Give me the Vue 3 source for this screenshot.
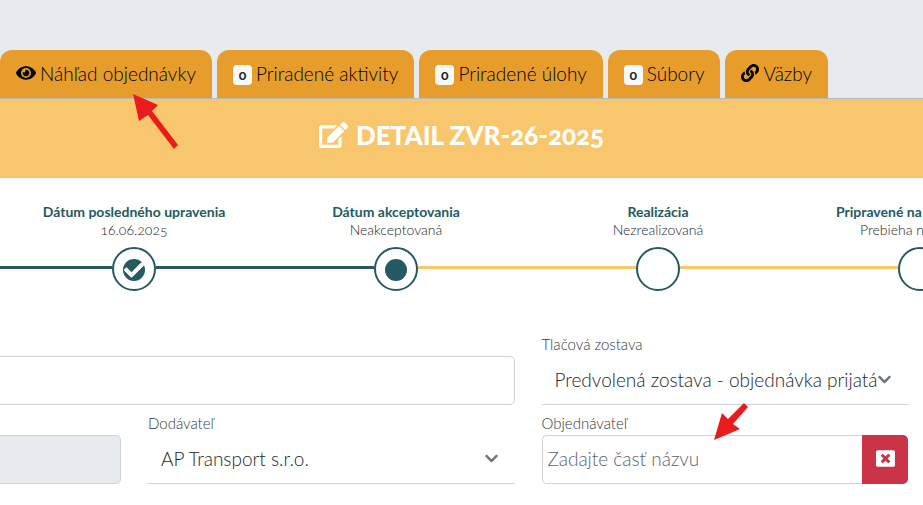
<script setup>
import { ref } from 'vue'

const icons = {
  eye: { box: '0 0 576 512', d: 'M572.52 241.4C518.29 135.59 410.93 64 288 64S57.68 135.64 3.48 241.41a32.35 32.35 0 0 0 0 29.19C57.71 376.41 165.07 448 288 448s230.32-71.64 284.52-177.41a32.35 32.35 0 0 0 0-29.19zM288 400a144 144 0 1 1 144-144 143.93 143.93 0 0 1-144 144zm0-240a95.31 95.31 0 0 0-25.31 3.79 47.85 47.85 0 0 1-66.9 66.9A95.78 95.78 0 1 0 288 160z' },
  link: { box: '0 0 512 512', d: 'M326.612 185.391c59.747 59.809 58.927 155.698.36 214.59-.11.12-.24.25-.36.37l-67.2 67.2c-59.27 59.27-155.699 59.262-214.96 0-59.27-59.26-59.27-155.7 0-214.96l37.106-37.106c9.84-9.84 26.786-3.3 27.294 10.606.648 17.722 3.826 35.527 9.69 52.721 1.986 5.822.567 12.262-3.783 16.612l-13.087 13.087c-28.026 28.026-28.905 73.66-1.155 101.96 28.024 28.579 74.086 28.749 102.325.51l67.2-67.19c28.191-28.191 28.073-73.757 0-101.83-3.701-3.694-7.429-6.564-10.341-8.569a16.037 16.037 0 0 1-6.947-12.606c-.396-10.567 3.348-21.456 11.698-29.806l21.054-21.055c5.521-5.521 14.182-6.199 20.584-1.731a152.482 152.482 0 0 1 20.522 17.197zM467.547 44.449c-59.261-59.262-155.69-59.27-214.96 0l-67.2 67.2c-.12.12-.25.25-.36.37-58.566 58.892-59.387 154.781.36 214.59a152.454 152.454 0 0 0 20.521 17.196c6.402 4.468 15.064 3.789 20.584-1.731l21.054-21.055c8.35-8.35 12.094-19.239 11.698-29.806a16.037 16.037 0 0 0-6.947-12.606c-2.912-2.005-6.64-4.875-10.341-8.569-28.073-28.073-28.191-73.639 0-101.83l67.2-67.19c28.239-28.239 74.3-28.069 102.325.51 27.75 28.3 26.872 73.934-1.155 101.96l-13.087 13.087c-4.35 4.35-5.769 10.79-3.783 16.612 5.864 17.194 9.042 34.999 9.69 52.721.509 13.906 17.454 20.446 27.294 10.606l37.106-37.106c59.271-59.259 59.271-155.699.001-214.959z' },
}

const chevron = 'M207.029 381.476L12.686 187.132c-9.373-9.373-9.373-24.569 0-33.941l22.667-22.667c9.357-9.357 24.522-9.375 33.901-.04L224 284.505l154.745-154.021c9.379-9.335 24.544-9.317 33.901.04l22.667 22.667c9.373 9.373 9.373 24.569 0 33.941L240.971 381.476c-9.373 9.372-24.569 9.372-33.942 0z'

const tabs = [
  { label: 'Náhľad objednávky', icon: icons.eye, pointed: true },
  { label: 'Priradené aktivity', count: 0 },
  { label: 'Priradené úlohy', count: 0 },
  { label: 'Súbory', count: 0 },
  { label: 'Väzby', icon: icons.link },
]

const steps = [
  { title: 'Dátum posledného upravenia', note: '16.06.2025', state: 'done' },
  { title: 'Dátum akceptovania', note: 'Neakceptovaná', state: 'current' },
  { title: 'Realizácia', note: 'Nezrealizovaná', state: 'waiting' },
  { title: 'Pripravené na fakturovanie', note: 'Prebieha nakladanie', state: 'waiting' },
]

const subject = ref('')
const customer = ref('')
</script>

<template>
  <div class="page">
    <nav class="tabs" aria-label="Sekcie objednávky">
      <button v-for="tab in tabs" :key="tab.label" type="button" class="tab">
        <svg v-if="tab.icon" class="tab-icon" :class="{ wide: tab.pointed }" :viewBox="tab.icon.box" aria-hidden="true">
          <path :d="tab.icon.d" />
        </svg>
        <span v-else class="badge">{{ tab.count }}</span>
        <span>{{ tab.label }}</span>
        <svg v-if="tab.pointed" class="arrow arrow-tab" viewBox="0 0 46 56" aria-hidden="true">
          <polygon points="0,0 25,11 19,17 45,51 41,55 15,21 6,27" />
        </svg>
      </button>
    </nav>

    <header class="banner">
      <svg class="banner-icon" viewBox="0 0 576 512" aria-hidden="true">
        <path d="M402.6 83.2l90.2 90.2c3.8 3.8 3.8 10 0 13.8L274.4 405.6l-92.8 10.3c-12.4 1.4-22.9-9.1-21.5-21.5l10.3-92.8L388.8 83.2c3.8-3.8 10-3.8 13.8 0zm162-22.9l-48.8-48.8c-15.2-15.2-39.9-15.2-55.2 0l-35.4 35.4c-3.8 3.8-3.8 10 0 13.8l90.2 90.2c3.8 3.8 10 3.8 13.8 0l35.4-35.4c15.2-15.3 15.2-40 0-55.2zM384 346.2V448H64V128h229.8c3.2 0 6.2-1.3 8.5-3.5l40-40c7.6-7.6 2.2-20.5-8.5-20.5H48C21.5 64 0 85.5 0 112v352c0 26.5 21.5 48 48 48h352c26.5 0 48-21.5 48-48V306.2c0-10.7-12.9-16-20.5-8.5l-40 40c-2.2 2.3-3.5 5.3-3.5 8.5z" />
      </svg>
      <h1>DETAIL ZVR-26-2025</h1>
    </header>

    <ol class="steps">
      <li v-for="step in steps" :key="step.title" class="step" :class="step.state">
        <strong>{{ step.title }}</strong>
        <span class="note">{{ step.note }}</span>
        <div class="track">
          <i class="line before"></i>
          <span class="ring">
            <span v-if="step.state !== 'waiting'" class="dot">
              <svg v-if="step.state === 'done'" viewBox="0 0 512 512" aria-hidden="true">
                <path d="M173.898 439.404l-166.4-166.4c-9.997-9.997-9.997-26.206 0-36.204l36.203-36.204c9.997-9.998 26.207-9.998 36.204 0L192 312.69 432.095 72.596c9.997-9.997 26.207-9.997 36.204 0l36.203 36.204c9.997 9.997 9.997 26.206 0 36.204l-294.4 294.401c-9.998 9.997-26.207 9.997-36.204-.001z" />
              </svg>
            </span>
          </span>
          <i class="line after"></i>
        </div>
      </li>
    </ol>

    <form class="form" @submit.prevent>
      <div class="field span">
        <input v-model="subject" class="box open" type="text" aria-label="Predmet">
      </div>
      <div class="field">
        <label for="report">Tlačová zostava</label>
        <div class="select">
          <select id="report">
            <option>Predvolená zostava - objednávka prijatá</option>
          </select>
          <svg viewBox="0 0 448 512" aria-hidden="true"><path :d="chevron" /></svg>
        </div>
      </div>
      <div class="field">
        <input class="box open" type="text" disabled aria-label="Číslo">
      </div>
      <div class="field">
        <label for="supplier">Dodávateľ</label>
        <div class="select">
          <select id="supplier">
            <option>AP Transport s.r.o.</option>
          </select>
          <svg viewBox="0 0 448 512" aria-hidden="true"><path :d="chevron" /></svg>
        </div>
      </div>
      <div class="field">
        <label for="customer">Objednávateľ</label>
        <div class="group">
          <input id="customer" v-model="customer" class="box joined" type="text" placeholder="Zadajte časť názvu">
          <button type="button" class="clear" aria-label="Vymazať" @click="customer = ''">
            <svg viewBox="0 0 512 512" aria-hidden="true">
              <path d="M464 32H48C21.5 32 0 53.5 0 80v352c0 26.5 21.5 48 48 48h416c26.5 0 48-21.5 48-48V80c0-26.5-21.5-48-48-48zm-83.6 290.5c4.8 4.8 4.8 12.6 0 17.4l-40.5 40.5c-4.8 4.8-12.6 4.8-17.4 0L256 313.3l-66.5 67.1c-4.8 4.8-12.6 4.8-17.4 0l-40.5-40.5c-4.8-4.8-4.8-12.6 0-17.4l67.1-66.5-67.1-66.5c-4.8-4.8-4.8-12.6 0-17.4l40.5-40.5c4.8-4.8 12.6-4.8 17.4 0l66.5 67.1 66.5-67.1c4.8-4.8 12.6-4.8 17.4 0l40.5 40.5c4.8 4.8 4.8 12.6 0 17.4L313.3 256l67.1 66.5z" />
            </svg>
          </button>
          <svg class="arrow arrow-field" viewBox="0 0 36 38" aria-hidden="true">
            <polygon points="0,37 8,10 14,16 30,0 34,4 19,21 26,26" />
          </svg>
        </div>
      </div>
    </form>
  </div>
</template>

<style>
body {
  margin: 0;
  background: #fff;
}
</style>

<style scoped>
.page {
  overflow: hidden;
  color: #212529;
  font-family: Lato, "Open Sans", sans-serif;
  font-size: 19px;
  font-weight: 300;
  font-variant-numeric: oldstyle-nums;
}
button,
input,
select {
  box-sizing: border-box;
  margin: 0;
  border: 0;
  font: inherit;
  color: inherit;
}
svg {
  fill: currentColor;
  flex: none;
}

.tabs {
  display: flex;
  gap: 5px;
  padding-top: 50px;
  background: #e7ebee;
  border-bottom: 1px solid #b3bac0;
}
.tab {
  position: relative;
  display: flex;
  align-items: center;
  gap: 4px;
  height: 48px;
  padding: 0 16px 2px;
  border-radius: 12px 12px 0 0;
  background: #e79d2b;
  color: #000;
  white-space: nowrap;
}
.tab-icon {
  width: 18px;
  height: 18px;
}
.tab-icon.wide {
  width: 20px;
}
.badge {
  min-width: 19px;
  height: 20px;
  box-sizing: border-box;
  margin-top: 4px;
  border-radius: 4px;
  background: #f8f9fa;
  color: #212529;
  font-size: 14px;
  font-weight: 700;
  line-height: 20px;
  text-align: center;
}

.arrow {
  position: absolute;
  z-index: 1;
  fill: #e81c1c;
  pointer-events: none;
}
.arrow-tab {
  left: 133px;
  top: 44px;
  width: 46px;
  height: 56px;
}
.arrow-field {
  left: 172px;
  top: -32px;
  width: 36px;
  height: 38px;
}

.banner {
  display: flex;
  justify-content: center;
  align-items: center;
  gap: 8px;
  height: 79px;
  padding-bottom: 8px;
  box-sizing: border-box;
  background: #f8c76d;
  color: #fff;
}
.banner-icon {
  width: 29px;
  height: 26px;
}
h1 {
  margin: 0;
  font-size: 26px;
  font-weight: 900;
  line-height: 30px;
}

.steps {
  display: grid;
  grid-template-columns: repeat(4, minmax(262px, 1fr));
  margin: 0;
  padding: 25px 0 0 3px;
  list-style: none;
}
.step {
  display: flex;
  flex-direction: column;
  font-size: 14px;
  line-height: 18px;
  text-align: center;
  white-space: nowrap;
}
.step strong {
  color: #245a60;
  font-weight: 700;
}
.track {
  display: flex;
  margin-top: 8px;
}
.line {
  flex: 1;
  height: 3px;
  margin-top: 19px;
  background: #f8c76d;
}
.done .line,
.current .before {
  background: #245a60;
}
.step:first-child .before {
  box-shadow: -3px 0 0 #245a60;
}
.ring {
  display: flex;
  flex: none;
  justify-content: center;
  width: 44px;
  height: 44px;
  box-sizing: border-box;
  border: 2px solid #245a60;
  border-radius: 50%;
}
.dot {
  display: flex;
  align-items: center;
  justify-content: center;
  width: 22px;
  height: 22px;
  margin-top: 10px;
  border-radius: 50%;
  background: #245a60;
  color: #fff;
}
.dot svg {
  width: 20px;
  height: 20px;
}

.form {
  display: grid;
  grid-template-columns: 121px 1fr 1fr;
  gap: 8px 27px;
  padding: 43px 15px 21px 0;
}
.field {
  display: flex;
  flex-direction: column;
  justify-content: flex-end;
  min-width: 0;
}
.span {
  grid-column: span 2;
}
label {
  height: 22px;
  color: #343a40;
  font-size: 15px;
  line-height: 21px;
}
.box {
  width: 100%;
  height: 49px;
  padding: 0 5px 2px;
  border: 1px solid #ced4da;
  border-radius: 5px;
  background: #fff;
}
.box.open {
  border-left: 0;
  border-radius: 0 5px 5px 0;
}
.box:disabled {
  background: #e7ebee;
}
.box::placeholder {
  color: #5c646b;
  opacity: 1;
}
.select {
  display: grid;
  align-items: center;
  border-bottom: 1px solid #ced4da;
}
.select > * {
  grid-area: 1 / 1;
}
.select select {
  width: 100%;
  height: 48px;
  padding: 0 13px 2px;
  appearance: none;
  background: transparent;
}
.select svg {
  justify-self: end;
  width: 13px;
  height: 15px;
  margin: 0 17px 2px 0;
  color: #6c757d;
  pointer-events: none;
}
.group {
  position: relative;
  display: flex;
}
.box.joined {
  flex: 1;
  min-width: 0;
  border-right: 0;
  border-radius: 5px 0 0 5px;
}
.clear {
  display: flex;
  align-items: center;
  justify-content: center;
  width: 46px;
  padding: 0 0 2px;
  border-radius: 0 5px 5px 0;
  background: #cb3347;
  color: #fff;
}
.clear svg {
  width: 19px;
  height: 19px;
}
</style>
